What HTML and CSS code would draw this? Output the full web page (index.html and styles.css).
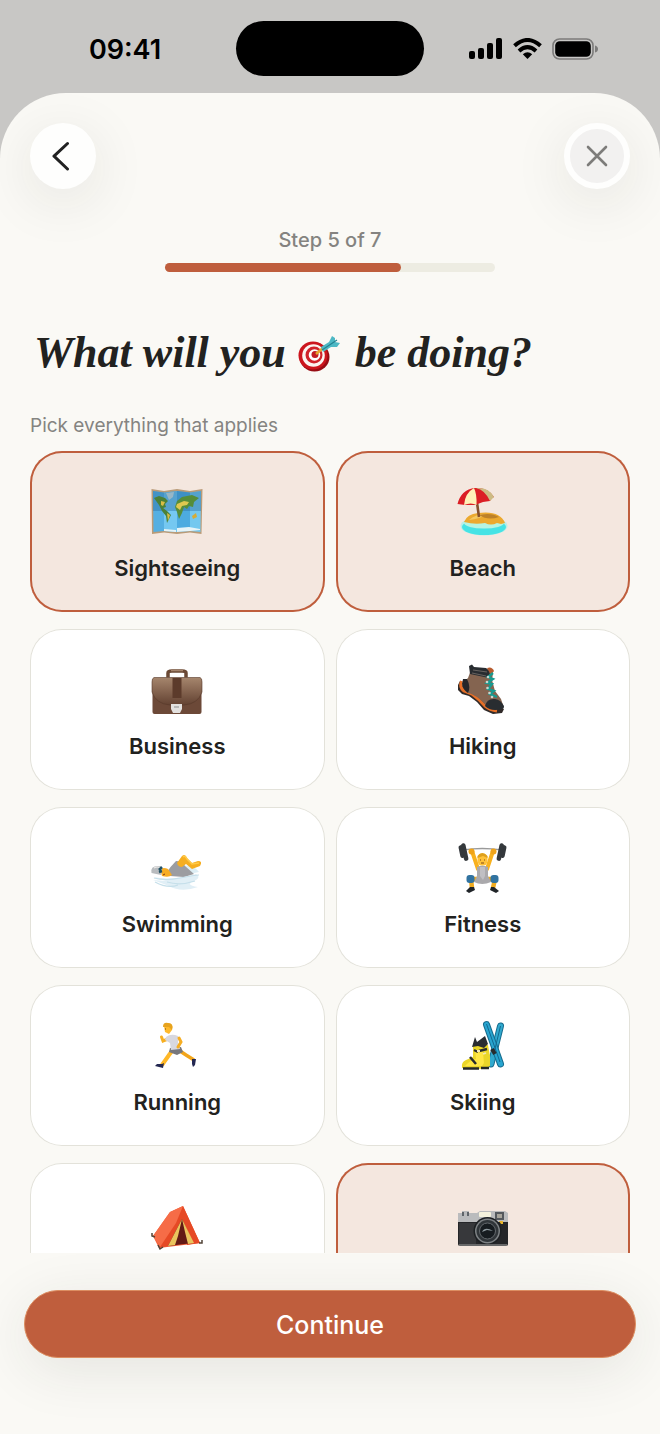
FILE: index.html
```html
<!DOCTYPE html>
<html lang="en">
<head>
<meta charset="utf-8">
<meta name="viewport" content="width=device-width, initial-scale=1">
<title>What will you be doing?</title>
<link rel="stylesheet" href="styles.css">
</head>
<body>
<div class="statusbar">
  <time class="clock">09:41</time>
  <div class="island"></div>
  <div class="status-icons">
    <svg width="34" height="22" viewBox="0 0 34 22"><rect x="0" y="13" width="6" height="8" rx="2"/><rect x="9" y="10" width="6" height="11" rx="2"/><rect x="18" y="5" width="6" height="16" rx="2"/><rect x="27" y="0" width="6" height="21" rx="2"/></svg>
    <svg width="29" height="22" viewBox="0 0 29 22" fill="none" stroke="#000" stroke-width="4"><path d="M1.500 7.800Q14.500-3.800 27.500 7.800"/><path d="M6 13Q14.500 5.400 23 13"/><path d="M14.500 21L9.800 16.300Q14.500 12.400 19.200 16.300Z" fill="#000" stroke="none"/></svg>
    <svg width="46" height="22" viewBox="0 0 46 22"><rect x="1" y="1" width="40" height="20" rx="6.500" fill="none" stroke="#7c7b7a" stroke-width="1.600"/><rect x="3.200" y="3.200" width="35.600" height="15.600" rx="4.500"/><path d="M43 7.500Q46 8.500 46 11T43 14.500Z" fill="#7c7b7a"/></svg>
  </div>
</div>
<main class="sheet">
  <header class="toolbar">
    <button class="round" type="button" aria-label="Back"><svg width="30" height="30" viewBox="0 0 30 30" fill="none" stroke="#222" stroke-width="3" stroke-linecap="round" stroke-linejoin="round"><path d="M19.500 2.500L6 15.200L19.500 28"/></svg></button>
    <button class="round close" type="button" aria-label="Close"><svg width="22" height="22" viewBox="0 0 22 22" fill="none" stroke="#7d7c7a" stroke-width="2.600" stroke-linecap="round"><path d="M2 2L20 20M20 2L2 20"/></svg></button>
  </header>
  <div class="step">
    <p class="step-text">Step 5 of 7</p>
    <div class="track"><div class="fill"></div></div>
  </div>
  <h1 class="title">What will you <svg class="target" width="44" height="40" viewBox="0 0 44 40"><ellipse cx="17.500" cy="23" rx="15" ry="14.500" fill="#970c14"/><ellipse cx="16" cy="21.500" rx="14.500" ry="14" fill="#cc151d"/><ellipse cx="16.500" cy="21.500" rx="11.300" ry="11.300" fill="#fbf4f1"/><ellipse cx="17" cy="21" rx="8.500" ry="8.500" fill="#d0222a"/><ellipse cx="17.500" cy="21" rx="5.800" ry="5.800" fill="#fff"/><circle cx="18" cy="20.500" r="3.500" fill="#c31d22"/><path d="M19 20L26 14" stroke="#e5a62c" stroke-width="2.500"/><path d="M24 13L32 8L35 2L38 4V8L43 9L40 13L34 13L26 18Z" fill="#4db8c4"/><path d="M25 16L40 6" stroke="#23808f" stroke-width="1.200"/></svg> be doing?</h1>
  <form class="picker" id="picker">
    <fieldset class="choices">
      <legend class="hint">Pick everything that applies</legend>
      <div class="grid">
        <label class="card"><input class="tick" type="checkbox" checked>
          <svg class="emoji" viewBox="0 0 52 52"><path d="M0.500 4L13 6L26 4L39 6L51.500 4L50.500 49L39 47.500L26 49L13 47.500L1 49Z" fill="#b99b78"/><path d="M2 6L13 7.500V46L2.500 47Z" fill="#55afe2"/><path d="M13 7.500L26 6V47L13 46Z" fill="#75c8f1"/><path d="M26 6L39 7.500V46L26 47Z" fill="#4dabe0"/><path d="M39 7.500L50 6L49.500 47L39 46Z" fill="#74c8ef"/><path d="M2 6L13 7.500L26 6L39 7.500L50 6V26H2Z" fill="#28699e" opacity=".4"/><path d="M3 13L8 11L14 13L17 16L14 19L15 22L12 23L16 26L20 30L18 34L16 38L15 31L11 26L8 20Z" fill="#4b8138"/><path d="M10 16L14 17L12 21L10 20ZM16 28L19 30L17 36Z" fill="#d9bc45"/><path d="M15 8L23 7L22 12L18 15Z" fill="#98b6c5"/><path d="M26 16L31 12L41 10L48 13L43 17L42 22L38 21L36 24L33 22L31 28L28 34L26 27L24 22Z" fill="#568d3a"/><path d="M26 19L33 16L38 17L36 20L31 21L29 25L25 22Z" fill="#dec850"/><path d="M41 31L45 28L46 32L42 34Z" fill="#d6ac36"/><path d="M13 44L25 45V47L13 46ZM26 43L38 42L49 44V45L39 46L26 47Z" fill="#e6f4f8"/></svg>
          <span class="label">Sightseeing</span></label>
        <label class="card"><input class="tick" type="checkbox" checked>
          <svg class="emoji" viewBox="0 0 52 52"><ellipse cx="27" cy="41" rx="23.500" ry="9.500" fill="#b9eee9"/><ellipse cx="27" cy="42" rx="22" ry="8" fill="#46e3e5"/><ellipse cx="27" cy="38" rx="20" ry="5.500" fill="#b6f4e2"/><path d="M7 37Q10 29 21 28Q43 25 48 38L44 39L40 38Q34 41 28 38Q18 40 7 37Z" fill="#eca92f"/><path d="M12 35Q18 29 30 29Q23 34 12 35Z" fill="#f5c862"/><path d="M22 30Q34 27 42 32Q31 36 22 30Z" fill="#bd8129"/><path d="M19.500 14L22 32" stroke="#87502c" stroke-width="2.600"/><path d="M0.500 19Q4 5 17 3Q31 2 37 12L35 13L33 16L26 17L18 20L8 20Z" fill="#db1e25"/><path d="M17 3Q8 8 7 20Q14 17 19.500 20Q20 9 17 3Z" fill="#fff1b9"/><path d="M19 3Q28 5 33 16L37 12Q32 2 19 3Z" fill="#cdbb84"/></svg>
          <span class="label">Beach</span></label>
        <label class="card"><input class="tick" type="checkbox">
          <svg class="emoji" viewBox="0 0 52 52"><defs><linearGradient id="leather" x1="0" y1="0" x2="0" y2="1"><stop stop-color="#a6866d"/><stop offset="1" stop-color="#634232"/></linearGradient></defs><path d="M17 14.500V10Q17 8 21 8H31Q35 8 35 10V14.500" fill="none" stroke="#6b4935" stroke-width="3.500"/><path d="M20 7.500H32" stroke="#a6856d" stroke-width="1.500"/><rect x="1.500" y="17" width="49" height="34" rx="2" fill="#6c4938"/><path d="M3 14.500H49Q51 15 51 19V29Q47 41 33 42H19Q5 41 1 29V19Q1 15 3 14.500Z" fill="url(#leather)" stroke="#563728" stroke-width=".6"/><path d="M21.500 15H30.500V35H21.500Z" fill="#5c3b2b"/><path d="M20 41H31V46L29 50H22L20 46Z" fill="#e3e1df"/><path d="M23 44H28" stroke="#aaa" stroke-width="1.500"/></svg>
          <span class="label">Business</span></label>
        <label class="card"><input class="tick" type="checkbox">
          <svg class="emoji" viewBox="0 0 52 52"><path d="M3 18L1 22L1 27L5 31L12 33L20 39L27 47L36 51L45 50L47 46L40 42L22 32Z" fill="#302a29"/><path d="M4.500 18Q2 24 7 28L15 31Q22 36 28 43Q33 47 40 48" fill="none" stroke="#e66f27" stroke-width="3"/><path d="M14 7L36 10L35 17L38 28L44 36L46 42Q45 47 36 46L29 42Q20 32 9 29L5 22Q7 18 11 15Z" fill="#846450"/><path d="M6 16Q3 25 11 30Q14 24 10 16Z" fill="#24262a"/><path d="M12 3L15 1.500L17 4L29 5L33 8L32 15L13 11Z" fill="#282c30"/><path d="M16 7L30 9M15 10L29 13" stroke="#66625f" stroke-width="1.200"/><path d="M28 43Q30 35 38 36Q44 37 47 43Q48 47 38 47Q32 47 28 43Z" fill="#292d31"/><path d="M30 5Q35 3 37 8L34 12Z" fill="#b75b2e"/><path d="M36 10L31 14L36 16L30 20L35 21L31 26L37 28L33 31L40 34" fill="none" stroke="#169b91" stroke-width="2.300"/><g fill="#c9d6cf"><circle cx="31" cy="14" r="1.300"/><circle cx="30" cy="19" r="1.300"/><circle cx="30.500" cy="25" r="1.300"/><circle cx="32.500" cy="30" r="1.300"/><circle cx="35" cy="34" r="1.300"/></g></svg>
          <span class="label">Hiking</span></label>
        <label class="card"><input class="tick" type="checkbox">
          <svg class="emoji" viewBox="0 0 52 52"><path d="M2 36Q21 40 45 33Q50 36 45 39Q32 44 47 46Q30 52 18 45L2 39L15 40Z" fill="#e1eff6"/><path d="M31 24Q45 25 48 31L38 33Z" fill="#dcedf4"/><path d="M16 31Q19 26 25 20Q31 20 34 25L43 33L33 36L19 35Z" fill="#9c9da1"/><path d="M26 22L31 15Q34 12 36 17L41 22L47 20Q52 20 49 25L41 28L35 23L31 26Q27 26 26 22Z" fill="#f6ae20"/><path d="M32 16Q34 14 36 18L41 23L48 22" fill="none" stroke="#ffca48" stroke-width="1.500"/><path d="M9 28Q13 26 17 28L21 34Q18 37 11 35Z" fill="#f7ad24"/><path d="M0.500 32Q-1 25 7 25Q12 25 11 29L10 34Z" fill="#b9bcbf"/><path d="M3 27Q7 25 9 27" stroke="#ececea" stroke-width="1.200" fill="none"/><path d="M8 29L11 26M8 31L11 30" stroke="#235265" stroke-width="2.500"/><path d="M14 33L12 34" stroke="#823a1a"/><path d="M3 37Q14 40 29 37T48 34M4 41Q17 48 27 44M16 41Q29 45 44 40" fill="none" stroke="#c5dfea" stroke-width="1.200"/></svg>
          <span class="label">Swimming</span></label>
        <label class="card"><input class="tick" type="checkbox">
          <svg class="emoji" viewBox="0 0 52 52"><path d="M6 9Q25 6 45 9" fill="none" stroke="#9a9a9a" stroke-width="1.300"/><path d="M15 10L21 28M36 10L30 28" stroke="#f8b11e" stroke-width="4" stroke-linecap="round"/><circle cx="14.500" cy="10.500" r="3" fill="#efa319"/><circle cx="36.500" cy="10.500" r="3" fill="#efa319"/><g fill="#34383c"><rect x="2.500" y="4" width="4.500" height="13" rx="2.200" transform="rotate(-12 5 11)"/><rect x="5.500" y="2" width="4.500" height="18" rx="2.200" transform="rotate(-12 8 11)"/><rect x="44" y="4" width="4.500" height="13" rx="2.200" transform="rotate(12 46 11)"/><rect x="41" y="2" width="4.500" height="18" rx="2.200" transform="rotate(12 43 11)"/></g><path d="M23 38L14 38L15 47M28 38L38 38L36 47" fill="none" stroke="#efab20" stroke-width="4.500"/><path d="M20 26Q25 23 31 26L31 35L34 41Q25 45 17 41L20 35Z" fill="#aaa9ac"/><path d="M23 26H28V35L26 39L23 35Z" fill="#c0bfc3"/><rect x="20.500" y="12.500" width="10" height="12" rx="4.500" fill="#ffc239"/><path d="M20.500 17V15Q25 9 30.500 15V17L26 15Z" fill="#dea01d"/><path d="M23 19H24M27 19H28M24 22H27" stroke="#814b16"/><g fill="#3173a0"><rect x="9.500" y="34" width="8" height="8" rx="3"/><rect x="33.500" y="34" width="8" height="8" rx="3"/></g><path d="M13 46L17 46L18 49L12 52L9 50ZM34 46L37 46L42 50L39 52L33 49Z" fill="#202428"/></svg>
          <span class="label">Fitness</span></label>
        <label class="card"><input class="tick" type="checkbox">
          <svg class="emoji" viewBox="0 0 52 52"><path d="M29 32L35 36L43 41" fill="none" stroke="#f2a51b" stroke-width="3.500"/><path d="M21 32L18 36L11 46" fill="none" stroke="#ffb827" stroke-width="4"/><path d="M41 40L45 40L44 46L42 48L41 45ZM13 44L12 49L4 47L6 45L11 45Z" fill="#242852"/><path d="M19 29L30 28L32 33L26 36L18 33Z" fill="#77777c"/><path d="M17 20L12 22L10.500 18" fill="none" stroke="#f7af21" stroke-width="3" stroke-linecap="round"/><path d="M15 18Q20 14 27 17L27 24L29 30L20 31L19 24L14 21Z" fill="#d8d8df"/><path d="M28 19L30 23L27 28" fill="none" stroke="#f6ad22" stroke-width="3" stroke-linecap="round"/><path d="M13 7Q13 4 17 4Q23 5 21 11L18 15L14 13Z" fill="#ffb92a"/><path d="M12 8Q12 3 17 4Q23 4 21 11L18 8Z" fill="#e7a31e"/><path d="M14.500 9.500V10.500" stroke="#734515"/></svg>
          <span class="label">Running</span></label>
        <label class="card"><input class="tick" type="checkbox">
          <svg class="emoji" viewBox="0 0 52 52"><path d="M43.500 7L34 45" stroke="#166c8e" stroke-width="7" stroke-linecap="round"/><path d="M43.500 7L34 45" stroke="#30a9ce" stroke-width="5" stroke-linecap="round"/><path d="M29.500 5.500L43.500 45" stroke="#166c8e" stroke-width="7" stroke-linecap="round"/><path d="M29.500 5.500L43.500 45" stroke="#28a5d0" stroke-width="5" stroke-linecap="round"/><path d="M29.500 5L43 43M43.500 7L37 34" stroke="#126a91"/><path d="M35 30L38 35" stroke="#272c2e" stroke-width="4"/><path d="M16 26L31 26L33 37L33 47L27 50L5 49Q4 43 9 41L16 38Z" fill="#ead629"/><path d="M18 30L26 33L27 44L25 47L8 47Q12 42 19 40Z" fill="#ffe743"/><path d="M15 28L18 18L20 23L28 17L31 25L27 29L21 27Z" fill="#292c32"/><path d="M17 31L21 33M22 32L30 30M13 38L19 45" stroke="#282c2d" stroke-width="2.500"/><path d="M20 32L23 32M26 35L29 34" stroke="#f0e9ba" stroke-width="1.800"/><path d="M6 49.500H22M24 49H32" stroke="#242827" stroke-width="2.500"/></svg>
          <span class="label">Skiing</span></label>
        <label class="card"><input class="tick" type="checkbox" aria-label="Camping">
          <svg class="emoji" viewBox="0 0 52 52"><path d="M19 15L32 9L49 46L8 51L2 39Z" fill="#ef5c35"/><path d="M32 9L49 46L36 48L31 23L17 49L8 51Z" fill="#e64925"/><path d="M19 15L32 9L25 26L9 50L2 39Z" fill="#f66c47"/><path d="M31 22L42 46L17 49Z" fill="#641a15"/><path d="M31 22L27 39L24 48L17 49ZM31 22L34 35L37 47L43 46Z" fill="#eac45d"/><path d="M1 36V39L4 40M7 48L9 52L12 50M48 46L51 46V43" fill="none" stroke="#514337" stroke-width="1.500"/></svg></label>
        <label class="card"><input class="tick" type="checkbox" aria-label="Photography" checked>
          <svg class="emoji" viewBox="0 0 52 52"><rect x="1" y="16" width="50" height="33" rx="2" fill="#252629"/><path d="M1 16H5V14H12V16H20L23 14H48L51 16V25H1Z" fill="#babbbd"/><path d="M6 15V19M11 15V19" stroke="#60656a" stroke-width="2"/><rect x="22" y="15" width="12" height="5" rx="1" fill="#f5f2dd"/><rect x="38" y="15" width="9" height="8" fill="#54585d"/><rect x="40" y="17" width="5" height="4" fill="#a7a49b"/><path d="M2 26H19V47H2Z" fill="#37383b"/><circle cx="30.500" cy="34" r="14" fill="#1d2023"/><circle cx="30.500" cy="34" r="12.500" fill="#7e8285"/><circle cx="30.500" cy="34" r="11" fill="#303539"/><circle cx="30.500" cy="34" r="8" fill="#171c20" stroke="#64696d"/><path d="M25 35Q28 29 36 34L30 33Z" fill="#8e999e"/><path d="M42 24H46V27H44Z" fill="#e8b52c"/><path d="M2 48H50" stroke="#aaa"/></svg></label>
      </div>
    </fieldset>
  </form>
  <footer class="footer"><button class="continue" type="submit" form="picker">Continue</button></footer>
</main>
</body>
</html>
```
FILE: styles.css
```css
* { box-sizing: border-box; }
body {
  margin: 0;
  height: 100vh;
  display: flex;
  flex-direction: column;
  overflow: hidden;
  background: #c8c7c5;
  color: #222220;
  font-family: Inter, "Liberation Sans", sans-serif;
}
svg { display: block; flex: none; }
button { font: inherit; cursor: pointer; }
.statusbar {
  flex: none;
  display: grid;
  grid-template-columns: 1fr 188px 1fr;
  align-items: center;
  padding: 21px 0 17px;
  color: #000;
}
.clock { padding: 2px 0 0 14px; text-align: center; font-size: 27px; line-height: 32px; font-weight: 600; }
.island { height: 55px; border-radius: 28px; background: #000; }
.status-icons { display: flex; justify-content: center; gap: 10px; padding-right: 17px; }
.sheet {
  flex: 1;
  min-height: 0;
  display: flex;
  flex-direction: column;
  overflow: hidden;
  background: #faf9f5;
  border-radius: 66px 66px 0 0;
}
.toolbar { flex: none; display: flex; justify-content: space-between; padding: 30px 30px 0; }
.round {
  display: grid;
  place-items: center;
  width: 66px;
  height: 66px;
  padding: 0;
  border: 0;
  border-radius: 50%;
  background: #fefefd;
  box-shadow: 0 12px 56px rgba(40, 40, 30, .1);
}
.close { border: 6px solid #fefefd; background: #f2f1f0; }
.step { flex: none; padding: 39px 0 0; }
.step-text { margin: 0 0 11px; text-align: center; color: #848380; font-size: 20px; line-height: 24px; font-weight: 500; }
.track { width: 50%; height: 9px; margin: 0 auto; border-radius: 5px; background: #edece2; }
.fill { width: 71.4%; height: 100%; border-radius: 5px; background: #bf5e3d; }
.title {
  flex: none;
  margin: 0;
  padding: 53px 34px 0;
  font-family: "Liberation Serif", serif;
  font-size: 44px;
  line-height: 56px;
  font-style: italic;
  font-weight: 700;
}
.target { display: inline-block; vertical-align: -7px; margin-right: 3px; }
.picker { flex: 1; min-height: 0; padding: 33px 30px 0; display: flex; }
.choices { flex: 1; min-width: 0; margin: 0; padding: 0; border: 0; overflow: hidden; }
.hint { padding: 0; margin-bottom: 13px; color: #858481; font-size: 19px; line-height: 24px; }
.grid { display: grid; grid-template-columns: 1fr 1fr; gap: 17px 11px; }
.card {
  position: relative;
  display: flex;
  flex-direction: column;
  align-items: center;
  gap: 16px;
  height: 161px;
  padding-top: 34px;
  border-radius: 32px;
  background: #fff;
  box-shadow: inset 0 0 0 1px #e3e2da;
  cursor: pointer;
}
.card:has(.tick:checked) { background: #f4e7df; box-shadow: inset 0 0 0 2px #bf5e3d; }
.tick { position: absolute; inset: 0; width: 100%; height: 100%; margin: 0; opacity: 0; cursor: pointer; }
.emoji { width: 52px; height: 52px; overflow: visible; }
.label { font-size: 22px; line-height: 30px; font-weight: 600; }
.footer { flex: none; padding: 37px 24px 76px; }
.continue {
  display: block;
  width: 100%;
  height: 68px;
  padding-top: 2px;
  border: 1px solid #dc8e62;
  border-radius: 34px;
  background: #bf5e3d;
  color: #fff;
  font-size: 25px;
  font-weight: 500;
  box-shadow: 0 12px 56px rgba(40, 50, 40, .1);
}
```
